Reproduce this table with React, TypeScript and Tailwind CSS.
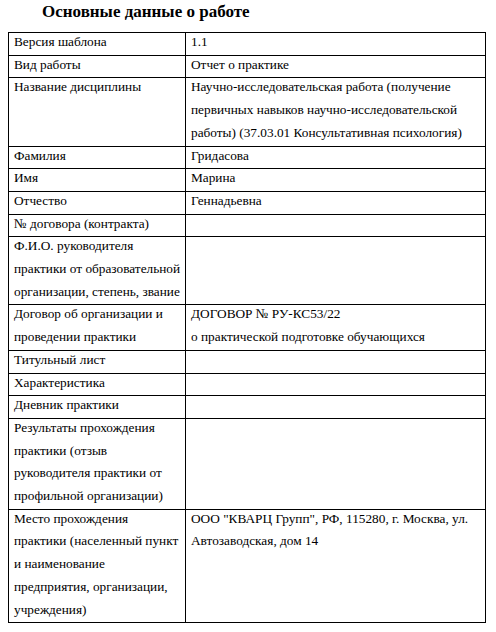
import React from "react";

const rows: [string[], string[]][] = [
  [["Версия шаблона"], ["1.1"]],
  [["Вид работы"], ["Отчет о практике"]],
  [
    ["Название дисциплины"],
    [
      "Научно-исследовательская работа (получение",
      "первичных навыков научно-исследовательской",
      "работы) (37.03.01 Консультативная психология)",
    ],
  ],
  [["Фамилия"], ["Гридасова"]],
  [["Имя"], ["Марина"]],
  [["Отчество"], ["Геннадьевна"]],
  [["№ договора (контракта)"], []],
  [
    [
      "Ф.И.О. руководителя",
      "практики от образовательной",
      "организации, степень, звание",
    ],
    [],
  ],
  [
    ["Договор об организации и", "проведении практики"],
    ["ДОГОВОР № РУ-КС53/22", "о практической подготовке обучающихся"],
  ],
  [["Титульный лист"], []],
  [["Характеристика"], []],
  [["Дневник практики"], []],
  [
    [
      "Результаты прохождения",
      "практики (отзыв",
      "руководителя практики от",
      "профильной организации)",
    ],
    [],
  ],
  [
    [
      "Место прохождения",
      "практики (населенный пункт",
      "и наименование",
      "предприятия, организации,",
      "учреждения)",
    ],
    ["ООО \"КВАРЦ Групп\", РФ, 115280, г. Москва, ул.", "Автозаводская, дом 14"],
  ],
];

function Cell({ lines, w }: { lines: string[]; w: string }) {
  return (
    <td className={`border border-black align-top px-[5px] py-0 ${w}`}>
      <div className="mt-[-2px] mb-[1px] leading-[22.7px] whitespace-nowrap">
        {lines.length ? lines.map((l, i) => <div key={i}>{l}</div>) : <div>&nbsp;</div>}
      </div>
    </td>
  );
}

export default function App() {
  return (
    <div className="w-[496px] h-[632px] bg-white text-black overflow-hidden font-['Liberation_Serif','Tinos','FreeSerif','Nimbus_Roman','PT_Serif','Noto_Serif',serif]">
      <div className="pl-[42px] pt-[1px] h-[32px] text-[17px] font-bold leading-[22px]">
        Основные данные о работе
      </div>
      <table className="ml-[8px] w-[478px] border-collapse text-[13.3px] table-fixed">
        <tbody>
          {rows.map(([l, r], i) => (
            <tr key={i}>
              <Cell lines={l} w="w-[177px]" />
              <Cell lines={r} w="" />
            </tr>
          ))}
        </tbody>
      </table>
    </div>
  );
}
